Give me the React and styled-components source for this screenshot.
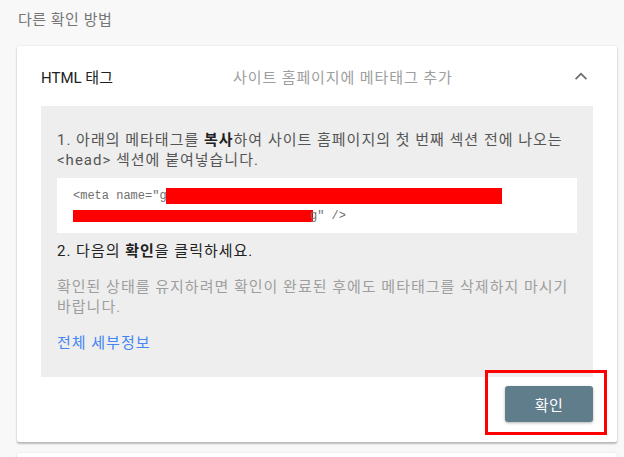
import styled, { createGlobalStyle } from "styled-components"

const GlobalStyle = createGlobalStyle`
  body {
    margin: 0;
    background: #f8f8f8;
    font-family: Roboto, "Noto Sans CJK KR", sans-serif;
  }
`

const Page = styled.div`
  padding: 10px 7px 0 17px;
  height: 457px;
  box-sizing: border-box;
  overflow: hidden;
`

const SectionTitle = styled.div`
  padding-left: 1px;
  font-size: 15px;
  line-height: 20px;
  letter-spacing: 0.5px;
  color: #757575;
  margin-bottom: 16px;
`

const Card = styled.div`
  background: #fff;
  border-radius: 2px;
  box-shadow: 0 2px 2px rgba(0, 0, 0, 0.24), 0 0 2px rgba(0, 0, 0, 0.12);
  margin-bottom: 11px;
  min-height: ${(p) => p.$minHeight || 0}px;
`

const Header = styled.div`
  display: grid;
  grid-template-columns: 192px 1fr 24px;
  align-items: center;
  height: 60px;
  padding: 0 24px;
  font-size: 15px;
`

const Method = styled.span`
  color: #212121;
`

const Summary = styled.span`
  color: #9e9e9e;
  letter-spacing: 0.9px;
`

const Chevron = styled.svg`
  width: 24px;
  height: 24px;
  fill: #6b6b6b;
`

const Body = styled.div`
  margin: 0 24px;
  background: #eeeeee;
  padding: 24px 16px;
  font-size: 15px;
  line-height: 20px;
  letter-spacing: 1px;
`

const Step = styled.p`
  margin: ${(p) => p.$mt || 0}px 0 0;
  color: ${(p) => p.$color || "#555"};

  b {
    color: #212121;
  }
`

const Code = styled.div`
  margin-top: 8px;
  background: #fff;
  padding: 8px 16px 7px;
  font-family: "Liberation Mono", monospace;
  font-size: 12px;
  line-height: 20px;
  letter-spacing: 0;
  color: #6f6f6f;
  white-space: pre;
`

const Redact = styled.span`
  display: inline-block;
  vertical-align: middle;
  background: #ff0000;
  width: ${(p) => p.$w}px;
  height: ${(p) => p.$h}px;
  margin-left: ${(p) => p.$ml || 0}px;
  margin-right: ${(p) => p.$mr || 0}px;
`

const Link = styled.a`
  display: block;
  margin-top: 16px;
  color: #4285f4;
  text-decoration: none;
`

const Footer = styled.div`
  display: flex;
  justify-content: flex-end;
  padding: 9px 24px 20px;
`

const Highlight = styled.div`
  position: relative;

  &::after {
    content: "";
    position: absolute;
    top: -16px;
    left: -20px;
    right: -14px;
    bottom: -13px;
    border: 3px solid #ff0000;
    pointer-events: none;
  }
`

const Button = styled.button`
  display: block;
  width: 88px;
  height: 36px;
  border: none;
  border-radius: 3px;
  background: #607d8b;
  color: #fff;
  font-family: Roboto, "Noto Sans CJK KR", sans-serif;
  font-size: 15px;
  letter-spacing: 0.5px;
  box-shadow: 0 1px 3px rgba(0, 0, 0, 0.3);
  cursor: pointer;
`

export default function App() {
  return (
    <>
      <GlobalStyle />
      <Page>
        <SectionTitle>다른 확인 방법</SectionTitle>
        <Card>
          <Header>
            <Method>HTML 태그</Method>
            <Summary>사이트 홈페이지에 메타태그 추가</Summary>
            <Chevron viewBox="0 0 24 24">
              <path d="M12 8.5l-6 6 1.2 1.2 4.8-4.8 4.8 4.8 1.2-1.2z" />
            </Chevron>
          </Header>
          <Body>
            <Step>
              1. 아래의 메타태그를 <b>복사</b>하여 사이트 홈페이지의 첫 번째 섹션 전에 나오는 &lt;head&gt; 섹션에 붙여넣습니다.
            </Step>
            <Code>
              {'<meta name="g'}
              <Redact $w={336} $h={16} $ml={-1} />
              {"\n"}
              <Redact $w={240} $h={12} $mr={-3} />
              {'g" />'}
            </Code>
            <Step $mt={8} $color="#222">
              2. 다음의 <b>확인</b>을 클릭하세요.
            </Step>
            <Step $mt={16} $color="#9e9e9e">
              확인된 상태를 유지하려면 확인이 완료된 후에도 메타태그를 삭제하지 마시기 바랍니다.
            </Step>
            <Link href="#">전체 세부정보</Link>
          </Body>
          <Footer>
            <Highlight>
              <Button>확인</Button>
            </Highlight>
          </Footer>
        </Card>
        <Card $minHeight={60} />
      </Page>
    </>
  )
}
